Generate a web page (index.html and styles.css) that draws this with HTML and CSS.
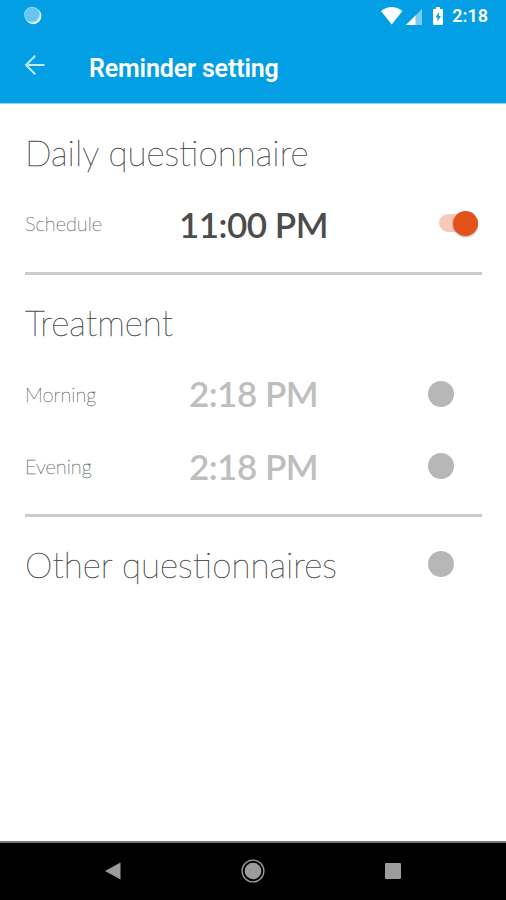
FILE: index.html
```html
<!DOCTYPE html>
<html lang="en">
<head>
  <meta charset="UTF-8">
  <meta name="viewport" content="width=device-width, initial-scale=1.0">
  <title>Reminder setting</title>
  <link rel="stylesheet" href="styles.css">
</head>
<body>
  <header class="header">
    <div class="status-bar">
      <svg class="sync-icon" width="20" height="20" viewBox="0 0 20 20">
        <circle cx="10.2" cy="10" r="8.2" fill="#e9f8ff"/>
        <circle cx="9" cy="8.6" r="7.7" fill="#68c5f0"/>
        <circle cx="9" cy="8.6" r="7.4" fill="none" stroke="#8bd3f5" stroke-width="1"/>
      </svg>
      <svg class="status-icons" width="64" height="22" viewBox="0 0 64 22">
        <path d="M1 6Q11.5-2 22.5 6L11.7 19.5Z" fill="#fff"/>
        <path d="M42 4V20H26Z" fill="#7accf2"/>
        <path d="M35.5 10.5V20H26Z" fill="#fff"/>
        <path d="M56 2h4v2h2q1 0 1 1v14q0 1-1 1h-8q-1 0-1-1V5q0-1 1-1h2z" fill="#fff"/>
        <path d="M59 7l-3.5 5.3h2v4.2l3.4-5.5h-2z" fill="#039fe4"/>
      </svg>
      <span class="clock">2:18</span>
    </div>
    <div class="app-bar">
      <svg class="back-icon" width="22" height="22" viewBox="0 0 22 22">
        <path d="M20.5 11H2M11.2 1.8L2 11l9.2 9.2" fill="none" stroke="#c2e9fa" stroke-width="2"/>
      </svg>
      <h1 class="title">Reminder setting</h1>
    </div>
  </header>

  <main class="content">
    <section class="section daily">
      <h2 class="heading">Daily questionnaire</h2>
      <div class="row">
        <span class="label">Schedule</span>
        <span class="time">11:00 PM</span>
        <span class="switch on"><span class="thumb"></span></span>
      </div>
    </section>
    <section class="section">
      <h2 class="heading">Treatment</h2>
      <div class="row">
        <span class="label">Morning</span>
        <span class="time disabled">2:18 PM</span>
        <span class="switch"><span class="thumb"></span></span>
      </div>
      <div class="row">
        <span class="label">Evening</span>
        <span class="time disabled">2:18 PM</span>
        <span class="switch"><span class="thumb"></span></span>
      </div>
    </section>
    <section class="section other">
      <h2 class="heading">Other questionnaires</h2>
      <span class="switch"><span class="thumb"></span></span>
    </section>
  </main>

  <nav class="nav-bar">
    <svg width="18" height="20" viewBox="0 0 18 20"><path d="M1 10L16.5 1.5v17z" fill="#9c9c9c"/></svg>
    <svg width="24" height="24" viewBox="0 0 24 24">
      <circle cx="12" cy="12" r="10.9" fill="none" stroke="#9c9c9c" stroke-width="1.3"/>
      <circle cx="12" cy="12" r="8.3" fill="#9c9c9c"/>
    </svg>
    <svg width="18" height="20" viewBox="0 0 18 20"><rect x="1" y="2" width="16" height="16" rx="1" fill="#9c9c9c"/></svg>
  </nav>
</body>
</html>
```
FILE: styles.css
```css
* {
  box-sizing: border-box;
}
body {
  margin: 0;
  height: 100vh;
  display: flex;
  flex-direction: column;
  background: #fff;
  font-family: Lato, sans-serif;
  overflow: hidden;
}
.header {
  height: 104px;
  background: #039fe4;
  color: #fff;
  font-family: Roboto, sans-serif;
  border-bottom: 1px solid #8fd2f2;
}
.status-bar {
  display: flex;
  align-items: center;
  height: 32px;
  padding: 0 18px 0 23px;
}
.status-icons {
  margin-left: auto;
  margin-right: 8px;
}
.clock {
  font-size: 18px;
  font-weight: 600;
  line-height: 32px;
}
.app-bar {
  display: flex;
  align-items: center;
  height: 71px;
  padding-left: 24px;
}
.back-icon {
  margin-bottom: 5px;
}
.title {
  margin: 2px 0 0 43px;
  font-size: 25px;
  font-weight: 600;
  letter-spacing: -0.15px;
}
.content {
  flex: 1;
  padding: 14px 24px 0 25px;
}
.section {
  padding-bottom: 12px;
  margin-bottom: 12px;
  border-bottom: 3px solid #cbcbcb;
}
.section.daily {
  padding-bottom: 13px;
  margin-bottom: 13px;
}
.heading {
  margin: 0;
  height: 69px;
  line-height: 68px;
  font-size: 35px;
  font-weight: 100;
  color: #4a4a4a;
  -webkit-text-stroke: 0.4px #4a4a4a;
}
.row {
  display: grid;
  grid-template-columns: 1fr auto 1fr;
  align-items: center;
  height: 73px;
}
.row:last-child {
  height: 72px;
}
.label {
  font-size: 20px;
  font-weight: 100;
  color: #666;
  -webkit-text-stroke: 0.3px #666;
}
.time {
  padding-top: 1px;
  font-size: 35px;
  font-weight: 600;
  letter-spacing: -0.5px;
  color: #4c4c4c;
}
.time.disabled {
  padding: 0 0 1px;
  color: #bebebe;
}
.switch {
  display: flex;
  justify-self: end;
  width: 39px;
  height: 18px;
  margin-right: 4px;
  align-items: center;
  border-radius: 9px;
}
.thumb {
  width: 26px;
  height: 26px;
  flex: none;
  border-radius: 50%;
  background: #b7b7b7;
}
.switch:not(.on) {
  width: 50px;
}
.switch.on {
  justify-content: flex-end;
  background: #f9c9b8;
}
.switch.on .thumb {
  width: 25px;
  height: 25px;
  background: #e4521b;
  box-shadow: 0 1px 2px rgba(0, 0, 0, 0.35);
}
.other {
  display: flex;
  align-items: center;
  justify-content: space-between;
  border-bottom: none;
}
.other .heading {
  line-height: 70px;
}
.nav-bar {
  display: flex;
  align-items: center;
  justify-content: space-between;
  height: 59px;
  padding: 0 104px 2px;
  background: #000;
  border-top: 2px solid #777;
}
```
